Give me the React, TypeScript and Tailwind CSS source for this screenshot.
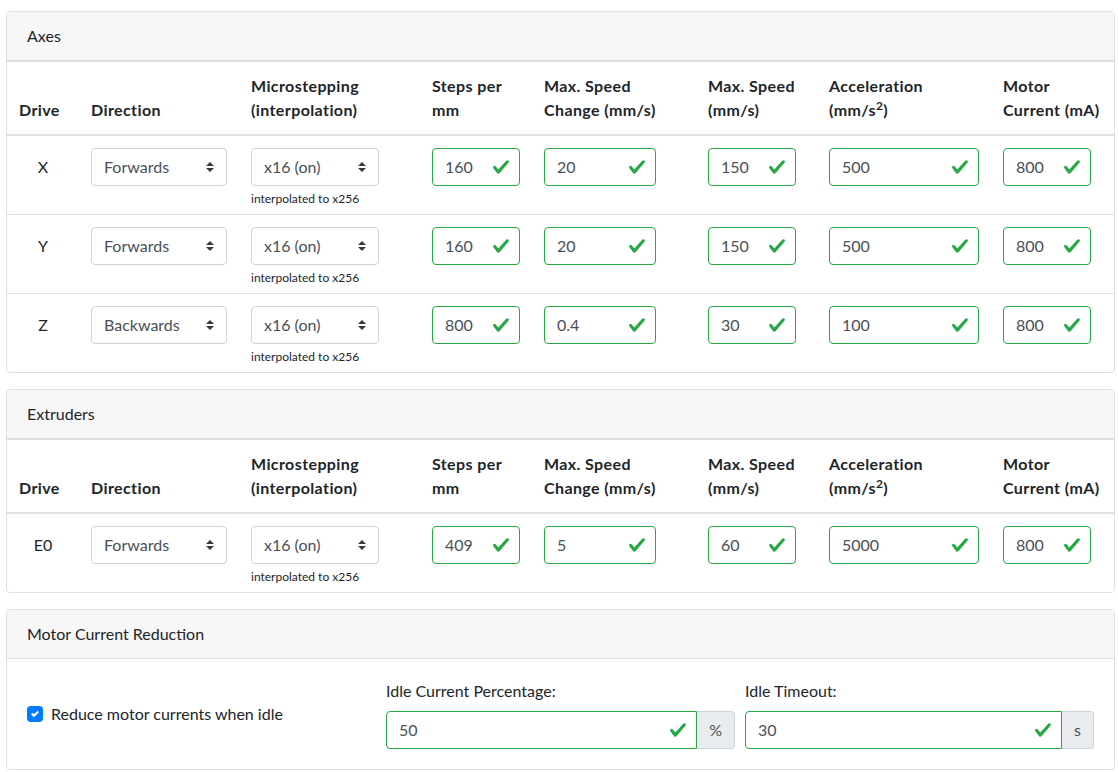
import React from 'react';

const FONT = { fontFamily: 'Lato, "Liberation Sans", sans-serif' };

type Row = { drive: string; dir: string; values: string[] };

const axes: Row[] = [
  { drive: 'X', dir: 'Forwards', values: ['160', '20', '150', '500', '800'] },
  { drive: 'Y', dir: 'Forwards', values: ['160', '20', '150', '500', '800'] },
  { drive: 'Z', dir: 'Backwards', values: ['800', '0.4', '30', '100', '800'] },
];

const extruders: Row[] = [{ drive: 'E0', dir: 'Forwards', values: ['409', '5', '60', '5000', '800'] }];

// widths of the numeric inputs, per column
const valueWidths = ['w-[88px]', 'w-[112px]', 'w-[88px]', 'w-[150px]', 'w-[88px]'];

function Check() {
  return (
    <svg viewBox="0 0 8 8" className="h-[18px] w-[18px] shrink-0">
      <path
        fill="#28a745"
        d="M2.3 6.73L.6 4.53c-.4-1.04.46-1.4 1.1-.8l1.1 1.4 3.4-3.8c.6-.63 1.6-.27 1.2.7l-4 4.6c-.43.5-.8.4-1.1.1z"
      />
    </svg>
  );
}

function Arrows() {
  return (
    <svg viewBox="0 0 4 5" className="h-[10px] w-[8px] shrink-0">
      <path fill="#343a40" d="M2 0L0 2h4zm0 5L0 3h4z" />
    </svg>
  );
}

function Select({ value, width }: { value: string; width: string }) {
  return (
    <div
      className={`${width} flex h-[38px] items-center justify-between rounded border border-[#ced4da] bg-white pl-3 pr-3 text-[#495057]`}
    >
      <span>{value}</span>
      <Arrows />
    </div>
  );
}

function ValidInput({ value, width }: { value: string; width: string }) {
  return (
    <div
      className={`${width} flex h-[38px] items-center justify-between rounded border border-[#28a745] bg-white pl-3 pr-[9px] text-[#495057]`}
    >
      <span>{value}</span>
      <Check />
    </div>
  );
}

function CardHeader({ title }: { title: string }) {
  return (
    <div className="border-b border-[#dfdfdf] bg-[#f7f7f7] px-5 py-3 leading-6 text-[#212529]">{title}</div>
  );
}

function DriveTable({ rows }: { rows: Row[] }) {
  const th =
    'border-t border-b-2 border-[#dee2e6] p-3 text-left align-bottom font-bold leading-6 tracking-[0.4px]';
  const td = 'border-t border-[#dee2e6] p-3 align-top';
  return (
    <table className="w-full table-fixed border-collapse text-[#212529]">
      <colgroup>
        <col className="w-[72px]" />
        <col className="w-[160px]" />
        <col className="w-[181px]" />
        <col className="w-[112px]" />
        <col className="w-[164px]" />
        <col className="w-[121px]" />
        <col className="w-[174px]" />
        <col />
      </colgroup>
      <thead>
        <tr>
          <th className={th}>Drive</th>
          <th className={th}>Direction</th>
          <th className={th}>
            Microstepping
            <br />
            (interpolation)
          </th>
          <th className={th}>
            Steps per
            <br />
            mm
          </th>
          <th className={th}>
            Max. Speed
            <br />
            Change (mm/s)
          </th>
          <th className={th}>
            Max. Speed
            <br />
            (mm/s)
          </th>
          <th className={th}>
            Acceleration
            <br />
            (mm/s<sup>2</sup>)
          </th>
          <th className={th}>
            Motor
            <br />
            Current (mA)
          </th>
        </tr>
      </thead>
      <tbody>
        {rows.map((row, i) => {
          const cell = `${i === 0 ? 'border-t-0' : ''} ${td}`;
          return (
            <tr key={row.drive}>
              <td className={cell}>
                <div className="flex h-[38px] items-center justify-center">{row.drive}</div>
              </td>
              <td className={cell}>
                <Select value={row.dir} width="w-[136px]" />
              </td>
              <td className={cell}>
                <Select value="x16 (on)" width="w-[128px]" />
                <div className="mt-[5px] h-[11px] text-xs leading-4 text-[#212529]">interpolated to x256</div>
              </td>
              {row.values.map((v, j) => (
                <td key={j} className={cell}>
                  <ValidInput value={v} width={valueWidths[j]} />
                </td>
              ))}
            </tr>
          );
        })}
      </tbody>
    </table>
  );
}

function Card({ title, children }: { title: string; children: React.ReactNode }) {
  return (
    <div className="mb-4 overflow-hidden rounded border border-[#dfdfdf] bg-white">
      <CardHeader title={title} />
      {children}
    </div>
  );
}

function GroupInput({ value, unit }: { value: string; unit: string }) {
  return (
    <div className="flex">
      <div className="flex h-[38px] flex-1 items-center justify-between rounded-l border border-[#28a745] pl-3 pr-[9px] text-[#495057]">
        <span>{value}</span>
        <Check />
      </div>
      <div className="flex h-[38px] items-center rounded-r border border-l-0 border-[#ced4da] bg-[#e9ecef] px-3 text-[#495057]">
        {unit}
      </div>
    </div>
  );
}

export default function App() {
  return (
    <div className="min-h-[772px] bg-white pl-[6px] pr-[3px] pt-[11px] text-base leading-6 text-[#212529]" style={FONT}>
      <Card title="Axes">
        <DriveTable rows={axes} />
      </Card>
      <Card title="Extruders">
        <DriveTable rows={extruders} />
      </Card>
      <Card title="Motor Current Reduction">
        <div className="grid grid-cols-3 items-center gap-x-[10px] p-5">
          <label className="flex items-center gap-2">
            <span className="flex h-4 w-4 items-center justify-center rounded bg-[#007bff]">
              <svg viewBox="0 0 8 8" className="h-2 w-2">
                <path fill="#fff" d="M6.564.75l-3.59 3.612-1.538-1.55L0 4.26l2.974 2.99L8 2.193z" />
              </svg>
            </span>
            <span>Reduce motor currents when idle</span>
          </label>
          <div>
            <div className="mb-2">Idle Current Percentage:</div>
            <GroupInput value="50" unit="%" />
          </div>
          <div>
            <div className="mb-2">Idle Timeout:</div>
            <GroupInput value="30" unit="s" />
          </div>
        </div>
      </Card>
    </div>
  );
}
